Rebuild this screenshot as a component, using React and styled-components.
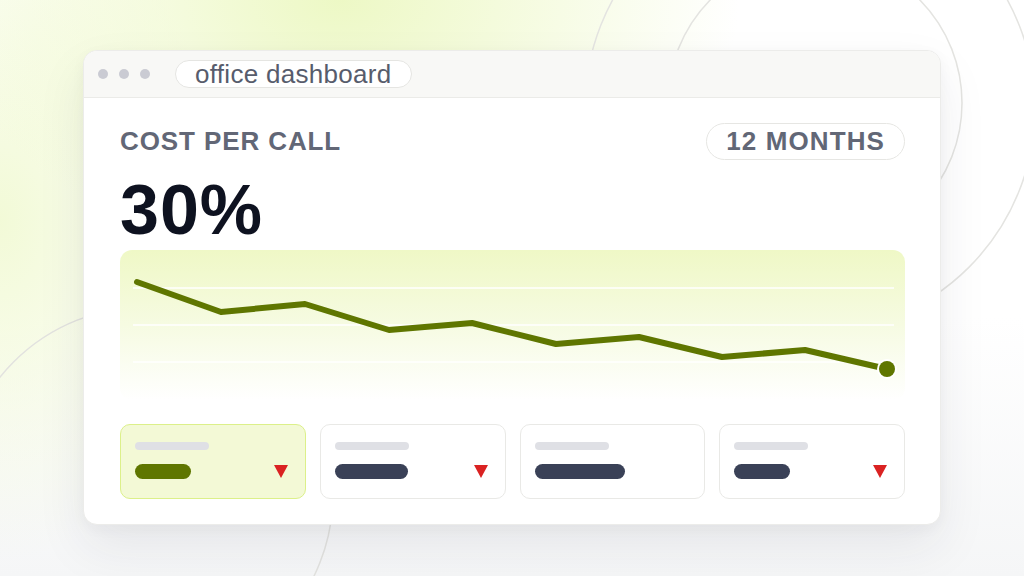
import styled, { createGlobalStyle } from 'styled-components';

const GlobalStyle = createGlobalStyle`
  html, body {
    margin: 0;
    padding: 0;
  }
  body {
    font-family: "Liberation Sans", Arial, sans-serif;
    background: #ffffff;
  }
`;

const Page = styled.div`
  position: relative;
  width: 1024px;
  height: 576px;
  overflow: hidden;
  box-sizing: border-box;
  padding: 50px 0 0 83px;
  background:
    radial-gradient(ellipse 400px 260px at 340px 0px, rgba(236, 248, 194, 0.95), rgba(236, 248, 194, 0) 100%),
    radial-gradient(ellipse 220px 340px at 0px 220px, rgba(240, 249, 208, 0.85), rgba(240, 249, 208, 0) 100%),
    linear-gradient(180deg, #ffffff 0%, #ffffff 55%, #f5f6f7 100%);
`;

const Backdrop = styled.svg`
  position: absolute;
  inset: 0;
  width: 1024px;
  height: 576px;
  pointer-events: none;
`;

const Window = styled.div`
  position: relative;
  width: 858px;
  height: 475px;
  box-sizing: border-box;
  background: #ffffff;
  border: 1px solid #ececea;
  border-radius: 14px;
  box-shadow: 0 22px 50px rgba(40, 44, 60, 0.08), 0 4px 14px rgba(40, 44, 60, 0.04);
  display: flex;
  flex-direction: column;
  overflow: hidden;
`;

const TitleBar = styled.div`
  height: 46px;
  flex-shrink: 0;
  background: #f8f8f6;
  border-bottom: 1px solid #ebebe8;
  display: flex;
  align-items: center;
  padding-left: 14px;
  gap: 25px;
`;

const Dots = styled.div`
  display: flex;
  gap: 11px;
`;

const Dot = styled.span`
  width: 10px;
  height: 10px;
  border-radius: 50%;
  background: #cacbd3;
`;

const AddressPill = styled.div`
  height: 28px;
  box-sizing: border-box;
  padding: 0 19px 0 19px;
  border: 1px solid #e5e5e2;
  border-radius: 14px;
  background: #ffffff;
  display: flex;
  align-items: center;
  font-size: 26px;
  letter-spacing: 0.3px;
  color: #575c6c;
`;

const Content = styled.div`
  padding: 24px 35px 0 36px;
  display: flex;
  flex-direction: column;
`;

const HeaderRow = styled.div`
  display: flex;
  justify-content: space-between;
  align-items: center;
  height: 38px;
`;

const Label = styled.div`
  font-size: 26px;
  font-weight: 700;
  letter-spacing: 0.9px;
  color: #626776;
`;

const RangePill = styled.div`
  height: 37px;
  box-sizing: border-box;
  padding: 0 19px;
  border: 1px solid #e6e6e3;
  border-radius: 19px;
  display: flex;
  align-items: center;
  font-size: 26px;
  font-weight: 700;
  letter-spacing: 1.1px;
  color: #626776;
`;

const BigValue = styled.div`
  font-size: 70px;
  font-weight: 700;
  letter-spacing: 1px;
  line-height: 1;
  color: #0e1220;
  margin-top: 15px;
  height: 75px;
`;

const ChartBox = styled.div`
  height: 150px;
  border-radius: 12px;
  background: linear-gradient(180deg, #eff8c6 0%, #f6fbe2 50%, #ffffff 100%);
`;

const CardRow = styled.div`
  margin-top: 24px;
  display: grid;
  grid-template-columns: repeat(4, 1fr);
  gap: 14px;
`;

const StatCard = styled.div`
  height: 75px;
  box-sizing: border-box;
  border-radius: 10px;
  border: 1.5px solid ${p => (p.$active ? '#dcf08a' : '#e9e9e6')};
  background: ${p => (p.$active ? '#f3f9d6' : '#ffffff')};
  padding: 17px 17px 0 14px;
  display: flex;
  flex-direction: column;
  gap: 14px;
`;

const LabelBar = styled.div`
  width: 74px;
  height: 8px;
  border-radius: 4px;
  background: #dfe0e5;
`;

const ValueRow = styled.div`
  display: flex;
  justify-content: space-between;
  align-items: center;
`;

const ValueBar = styled.div`
  height: 15px;
  border-radius: 8px;
  background: ${p => (p.$active ? '#5f7600' : '#3a4157')};
`;

const DownArrow = styled.span`
  width: 0;
  height: 0;
  border-left: 7.5px solid transparent;
  border-right: 7.5px solid transparent;
  border-top: 13px solid #da2222;
`;

const points = [
  [17, 32], [101, 62], [185, 54], [269, 80], [352, 73],
  [436, 94], [519, 87], [602, 107], [685, 100], [767, 119],
];

const cards = [
  { active: true, width: 56, arrow: true },
  { active: false, width: 73, arrow: true },
  { active: false, width: 90, arrow: false },
  { active: false, width: 56, arrow: true },
];

const Chart = () => {
  const last = points[points.length - 1];
  return (
    <ChartBox>
      <svg width="786" height="150" viewBox="0 0 786 150">
        {[38, 75, 112].map(y => (
          <line key={y} x1="13" x2="774" y1={y} y2={y} stroke="#ffffff" strokeWidth="1.5" />
        ))}
        <polyline
          points={points.map(p => p.join(',')).join(' ')}
          fill="none"
          stroke="#5f7600"
          strokeWidth="6"
          strokeLinejoin="round"
          strokeLinecap="round"
        />
        <circle cx={last[0]} cy={last[1]} r="10" fill="#ffffff" />
        <circle cx={last[0]} cy={last[1]} r="8" fill="#5f7600" />
      </svg>
    </ChartBox>
  );
};

const App = () => (
  <>
    <GlobalStyle />
    <Page>
      <Backdrop viewBox="0 0 1024 576">
        <circle cx="810" cy="108" r="225" fill="none" stroke="#e4e4e1" strokeWidth="1.5" />
        <circle cx="815" cy="103" r="147" fill="none" stroke="#e4e4e1" strokeWidth="1.5" />
        <circle cx="146" cy="494" r="187" fill="none" stroke="#e2e2df" strokeWidth="1.5" />
      </Backdrop>
      <Window>
        <TitleBar>
          <Dots>
            <Dot />
            <Dot />
            <Dot />
          </Dots>
          <AddressPill>office dashboard</AddressPill>
        </TitleBar>
        <Content>
          <HeaderRow>
            <Label>COST PER CALL</Label>
            <RangePill>12 MONTHS</RangePill>
          </HeaderRow>
          <BigValue>30%</BigValue>
          <Chart />
          <CardRow>
            {cards.map((c, i) => (
              <StatCard key={i} $active={c.active}>
                <LabelBar />
                <ValueRow>
                  <ValueBar $active={c.active} style={{ width: c.width }} />
                  {c.arrow && <DownArrow />}
                </ValueRow>
              </StatCard>
            ))}
          </CardRow>
        </Content>
      </Window>
    </Page>
  </>
);

export default App;
